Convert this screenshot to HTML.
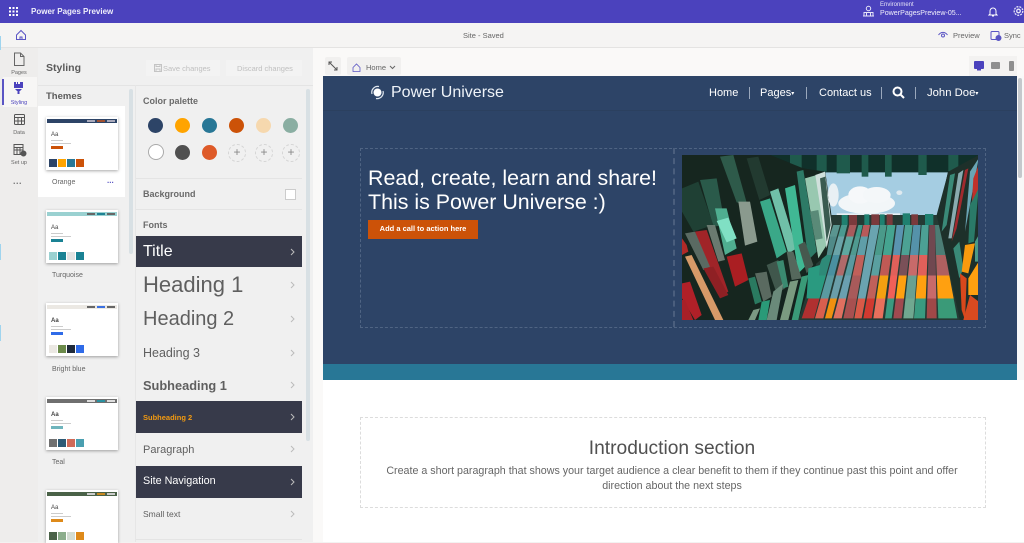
<!DOCTYPE html>
<html><head><meta charset="utf-8"><title>Power Pages Preview</title>
<style>
html,body{margin:0;padding:0}
body{width:1024px;height:542px;overflow:hidden;position:relative;background:#f3f2f1;font-family:"Liberation Sans",sans-serif;color:#555}
.a{position:absolute;white-space:nowrap}
.th{position:absolute;left:46px;width:72px;height:53px;background:#fff;box-shadow:0 1px 3px rgba(0,0,0,.35)}
.th i{position:absolute;display:block}
.th .bar{left:1px;top:2px;width:70px;height:4px}
.th .aa{position:absolute;left:5px;top:15px;font-size:6px;color:#444;font-weight:bold}
.th .l1{left:5px;top:23px;width:12px;height:1px;background:#ccc}
.th .l2{left:5px;top:26px;width:20px;height:1px;background:#ccc}
.th .btn{left:5px;top:29px;width:12px;height:3px}
.th .s{top:42px;width:8px;height:8px}
.tn{position:absolute;left:52px;font-size:7px;color:#666}
.dot{position:absolute;width:15px;height:15px;border-radius:50%}
.plus{position:absolute;width:16px;height:16px;border-radius:50%;border:1px dashed #d5d5d5;color:#888;font-size:12px;line-height:15px;text-align:center}
.row{position:absolute;left:136px;width:166px;color:#5f5f5f}
.row.dk{background:#373a4a;color:#fff}
.row span{position:absolute;left:7px;white-space:nowrap}
.row svg{position:absolute;right:7px;top:50%;margin-top:-4px}
.nl{position:absolute;left:4px;width:30px;text-align:center;font-size:5.5px;color:#666}
.sep{position:absolute;width:1px;height:12px;background:#9aa8bc;top:87px}
.nav{position:absolute;top:87px;font-size:11px;color:#fff;white-space:nowrap}
.lb{position:absolute;left:143px;font-size:9px;font-weight:bold;color:#6a6a6a;white-space:nowrap}
</style></head><body>
<!-- top bar -->
<div class="a" style="left:0;top:0;width:1024px;height:23px;background:#4b42bd"></div>
<svg class="a" style="left:9px;top:7px" width="9" height="9" fill="#fff"><rect width="2" height="2"/><rect x="3.5" width="2" height="2"/><rect x="7" width="2" height="2"/><rect y="3.5" width="2" height="2"/><rect x="3.5" y="3.5" width="2" height="2"/><rect x="7" y="3.5" width="2" height="2"/><rect y="7" width="2" height="2"/><rect x="3.5" y="7" width="2" height="2"/><rect x="7" y="7" width="2" height="2"/></svg>
<div class="a" style="left:31px;top:7px;font-size:8px;font-weight:bold;color:#eeeefa">Power Pages Preview</div>
<svg class="a" style="left:862px;top:5px" width="13" height="13" fill="none" stroke="#e6e4f7" stroke-width="1"><circle cx="6.5" cy="3.5" r="2.2"/><path d="M2 11V7.5h9V11M1 11h11M4.500 7.500V11M8.500 7.500V11"/></svg>
<div class="a" style="left:880px;top:2px;font-size:6px;color:#e6e4f7">Environment</div>
<div class="a" style="left:880px;top:9px;font-size:7.100px;color:#f0effa">PowerPagesPreview-05...</div>
<svg class="a" style="left:988px;top:6px" width="10" height="11" fill="none" stroke="#fff" stroke-width="1"><path d="M2 8V5a3 3 0 0 1 6 0v3l1 1H1zM4 10h2"/></svg>
<svg class="a" style="left:1013px;top:5px" width="11" height="12" fill="none" stroke="#e6e4f7" stroke-width="1.300"><circle cx="5.500" cy="6" r="1.800"/><circle cx="5.500" cy="6" r="4.300" stroke-dasharray="2 1"/></svg>
<!-- second bar -->
<div class="a" style="left:0;top:23px;width:1024px;height:24px;background:#f5f4f3;border-bottom:1px solid #e4e3e2"></div>
<svg class="a" style="left:15px;top:29px" width="12" height="12" fill="none" stroke="#5a55c4" stroke-width="1"><path d="M1.500 6 6 1.500 10.500 6V10.500H1.500zM5 10.500V8h2v2.500"/></svg>
<div class="a" style="left:463px;top:31px;font-size:7.500px;color:#666">Site - Saved</div>
<svg class="a" style="left:938px;top:31px" width="10" height="8" fill="none" stroke="#5a55c4" stroke-width="1"><path d="M.5 4C3 .5 7 .5 9.500 4"/><circle cx="5" cy="4.500" r="1.500"/></svg>
<div class="a" style="left:953px;top:31px;font-size:7.500px;color:#666">Preview</div>
<svg class="a" style="left:990px;top:30px" width="12" height="11" fill="none" stroke="#5a55c4" stroke-width="1"><rect x="1" y="1.500" width="8" height="8" rx="1"/><circle cx="8.500" cy="8" r="2.500" fill="#5a55c4"/></svg>
<div class="a" style="left:1004px;top:31px;font-size:7.500px;color:#666">Sync</div>
<!-- left rail -->
<div class="a" style="left:0;top:48px;width:38px;height:494px;background:#eeedec"></div>
<div class="a" style="left:3px;top:77px;width:34px;height:30px;background:#f7f6f5"></div>
<div class="a" style="left:2px;top:79px;width:2px;height:26px;background:#5a55c4"></div>
<div class="a" style="left:0;top:36px;width:1px;height:14px;background:#9fd4ee"></div>
<div class="a" style="left:0;top:244px;width:1px;height:16px;background:#9fd4ee"></div>
<div class="a" style="left:0;top:325px;width:1px;height:16px;background:#9fd4ee"></div>
<svg class="a" style="left:13px;top:52px" width="12" height="15" fill="none" stroke="#666" stroke-width="1"><path d="M1.500 1h6l3.500 3.500V13.500h-9.500zM7.500 1v3.500H11"/></svg>
<div class="nl" style="top:70px">Pages</div>
<svg class="a" style="left:14px;top:82px" width="10" height="12" fill="#4b42bd"><path d="M0 0h2v2h1V0h1v2h2V0h3v6H0zM1 7h7L6 9H5.500v3h-2V9H3z"/></svg>
<div class="nl" style="top:100px;color:#4b42bd">Styling</div>
<svg class="a" style="left:13px;top:113px" width="13" height="13" fill="none" stroke="#555" stroke-width="1"><rect x="1.500" y="1.500" width="10" height="10" rx="1"/><path d="M1.500 4.500h10M1.500 8h10M5 4.500v7M8.500 4.500v7"/></svg>
<div class="nl" style="top:130px">Data</div>
<svg class="a" style="left:13px;top:143px" width="14" height="14" fill="none" stroke="#555" stroke-width="1"><rect x="1" y="1.500" width="9" height="10"/><path d="M1 4.500h9M1 7h9M4 4.500v7M7 4.500v7"/><circle cx="10.500" cy="10.500" r="2.500" fill="#555"/></svg>
<div class="nl" style="top:160px">Set up</div>
<div class="a" style="left:13px;top:176px;font-size:9px;color:#777;letter-spacing:.5px;font-weight:bold">...</div>
<!-- styling panel -->
<div class="a" style="left:38px;top:48px;width:275px;height:494px;background:#f0f0f0"></div>
<div class="a" style="left:46px;top:62px;font-size:10.500px;font-weight:bold;color:#5a5a5a">Styling</div>
<div class="a" style="left:146px;top:60px;width:74px;height:16px;background:#f3f3f3"></div>
<div class="a" style="left:226px;top:60px;width:76px;height:16px;background:#f3f3f3"></div>
<svg class="a" style="left:154px;top:64px" width="8" height="8" fill="none" stroke="#c4c4c4"><rect x=".5" y=".5" width="7" height="7"/><path d="M2 .5v2h4v-2M2 7.500V5h4v2.500"/></svg>
<div class="a" style="left:163px;top:64px;font-size:7.500px;color:#c0c0c0">Save changes</div>
<div class="a" style="left:237px;top:64px;font-size:7.500px;color:#c0c0c0">Discard changes</div>
<div class="a" style="left:38px;top:85px;width:275px;height:1px;background:#e4e4e4"></div>
<div class="a" style="left:135px;top:85px;width:1px;height:457px;background:#e6e6e6"></div>
<div class="a" style="left:46px;top:91px;font-size:9.500px;font-weight:bold;color:#5a5a5a">Themes</div>
<div class="a" style="left:129px;top:89px;width:4px;height:165px;background:#d8e0e4;border-radius:2px"></div>
<div class="a" style="left:306px;top:89px;width:4px;height:352px;background:#d8e0e4;border-radius:2px"></div>
<div class="a" style="left:38px;top:106px;width:87px;height:91px;background:#fff"></div>

<div class="th" style="top:117px"><i class="bar" style="background:#2d4467"></i><i style="left:41px;top:3px;width:8px;height:2px;background:#aab"></i><i style="left:51px;top:3px;width:8px;height:2px;background:#a05030"></i><i style="left:61px;top:3px;width:8px;height:2px;background:#aab"></i><span class="aa" style="font-weight:normal">Aa</span><i class="l1"></i><i class="l2"></i><i class="btn" style="background:#cc5208"></i><i class="s" style="left:3px;background:#2d4467"></i><i class="s" style="left:12px;background:#ffa400"></i><i class="s" style="left:21px;background:#287796"></i><i class="s" style="left:30px;background:#cc5208"></i></div>
<div class="tn" style="top:179px">Orange</div>
<div class="a" style="left:107px;top:176px;font-size:8px;color:#5a55c4;font-weight:bold">...</div>

<div class="th" style="top:210px"><i class="bar" style="background:#9ad1d1"></i><i style="left:41px;top:3px;width:8px;height:2px;background:#666"></i><i style="left:51px;top:3px;width:8px;height:2px;background:#1f8394"></i><i style="left:61px;top:3px;width:8px;height:2px;background:#666"></i><span class="aa" style="font-weight:normal">Aa</span><i class="l1"></i><i class="l2"></i><i class="btn" style="background:#1a8294"></i><i class="s" style="left:3px;background:#9ad1d1"></i><i class="s" style="left:12px;background:#1a8294"></i><i class="s" style="left:21px;background:#e3e3e3"></i><i class="s" style="left:30px;background:#1a8294"></i></div>
<div class="tn" style="top:272px">Turquoise</div>

<div class="th" style="top:303px"><i class="bar" style="background:#ebe8e3"></i><i style="left:41px;top:3px;width:8px;height:2px;background:#666"></i><i style="left:51px;top:3px;width:8px;height:2px;background:#3a70e0"></i><i style="left:61px;top:3px;width:8px;height:2px;background:#666"></i><span class="aa">Aa</span><i class="l1"></i><i class="l2"></i><i class="btn" style="background:#2f6be8"></i><i class="s" style="left:3px;background:#ebe8e3"></i><i class="s" style="left:12px;background:#6b8a4a"></i><i class="s" style="left:21px;background:#1f2a3a"></i><i class="s" style="left:30px;background:#2f6be8"></i></div>
<div class="tn" style="top:366px">Bright blue</div>

<div class="th" style="top:397px"><i class="bar" style="background:#6f6f6f"></i><i style="left:41px;top:3px;width:8px;height:2px;background:#ddd"></i><i style="left:51px;top:3px;width:8px;height:2px;background:#2a90a0"></i><i style="left:61px;top:3px;width:8px;height:2px;background:#ddd"></i><span class="aa">Aa</span><i class="l1"></i><i class="l2"></i><i class="btn" style="background:#6fb5bd"></i><i class="s" style="left:3px;background:#707070"></i><i class="s" style="left:12px;background:#2d5a75"></i><i class="s" style="left:21px;background:#cf6a58"></i><i class="s" style="left:30px;background:#4a9fb0"></i></div>
<div class="tn" style="top:459px">Teal</div>

<div class="th" style="top:490px"><i class="bar" style="background:#4a6248"></i><i style="left:41px;top:3px;width:8px;height:2px;background:#ccc"></i><i style="left:51px;top:3px;width:8px;height:2px;background:#c98820"></i><i style="left:61px;top:3px;width:8px;height:2px;background:#ccc"></i><span class="aa" style="font-weight:normal">Aa</span><i class="l1"></i><i class="l2"></i><i class="btn" style="background:#de8a1a"></i><i class="s" style="left:3px;background:#4a6248"></i><i class="s" style="left:12px;background:#8bad8b"></i><i class="s" style="left:21px;background:#d3ddd3"></i><i class="s" style="left:30px;background:#de8a1a"></i></div>

<!-- palette -->
<div class="lb" style="top:96px">Color palette</div>
<div class="dot" style="left:148px;top:118px;background:#2d4467"></div>
<div class="dot" style="left:175px;top:118px;background:#ffa400"></div>
<div class="dot" style="left:202px;top:118px;background:#287796"></div>
<div class="dot" style="left:229px;top:118px;background:#cc5208"></div>
<div class="dot" style="left:256px;top:118px;background:#f6d8ae"></div>
<div class="dot" style="left:283px;top:118px;background:#8aaea2"></div>
<div class="dot" style="left:148px;top:144px;width:14px;height:14px;background:#fff;border:1px solid #aaa"></div>
<div class="dot" style="left:175px;top:145px;background:#505050"></div>
<div class="dot" style="left:202px;top:145px;background:#de5a28"></div>
<div class="plus" style="left:228px;top:144px">+</div>
<div class="plus" style="left:255px;top:144px">+</div>
<div class="plus" style="left:282px;top:144px">+</div>
<div class="a" style="left:136px;top:178px;width:166px;height:1px;background:#e4e4e4"></div>
<div class="lb" style="top:189px">Background</div>
<div class="a" style="left:285px;top:189px;width:9px;height:9px;background:#fff;border:1px solid #ccc"></div>
<div class="a" style="left:136px;top:209px;width:166px;height:1px;background:#e4e4e4"></div>
<div class="lb" style="top:220px">Fonts</div>

<div class="row dk" style="top:236px;height:31px"><span style="top:7px;font-size:16px">Title</span><svg width="5" height="8" fill="none" stroke="#bbb"><path d="M1 1l3 3-3 3"/></svg></div>
<div class="row" style="top:268px;height:33px"><span style="top:4px;font-size:22px">Heading 1</span><svg width="5" height="8" fill="none" stroke="#bbb"><path d="M1 1l3 3-3 3"/></svg></div>
<div class="row" style="top:302px;height:33px"><span style="top:6px;font-size:20px">Heading 2</span><svg width="5" height="8" fill="none" stroke="#bbb"><path d="M1 1l3 3-3 3"/></svg></div>
<div class="row" style="top:336px;height:33px"><span style="top:10px;font-size:12.500px">Heading 3</span><svg width="5" height="8" fill="none" stroke="#bbb"><path d="M1 1l3 3-3 3"/></svg></div>
<div class="row" style="top:369px;height:32px"><span style="top:9px;font-size:12.800px;font-weight:bold">Subheading 1</span><svg width="5" height="8" fill="none" stroke="#bbb"><path d="M1 1l3 3-3 3"/></svg></div>
<div class="row dk" style="top:401px;height:32px"><span style="top:12px;font-size:7.500px;font-weight:bold;color:#f39a10">Subheading 2</span><svg width="5" height="8" fill="none" stroke="#bbb"><path d="M1 1l3 3-3 3"/></svg></div>
<div class="row" style="top:433px;height:32px"><span style="top:11px;font-size:11px">Paragraph</span><svg width="5" height="8" fill="none" stroke="#bbb"><path d="M1 1l3 3-3 3"/></svg></div>
<div class="row dk" style="top:466px;height:32px"><span style="top:9px;font-size:10.800px">Site Navigation</span><svg width="5" height="8" fill="none" stroke="#bbb"><path d="M1 1l3 3-3 3"/></svg></div>
<div class="row" style="top:498px;height:32px"><span style="top:11px;font-size:8.500px">Small text</span><svg width="5" height="8" fill="none" stroke="#bbb"><path d="M1 1l3 3-3 3"/></svg></div>
<div class="a" style="left:136px;top:539px;width:166px;height:1px;background:#e4e4e4"></div>

<!-- canvas -->
<div class="a" style="left:313px;top:48px;width:711px;height:494px;background:#faf9f8"></div>
<div class="a" style="left:325px;top:57px;width:16px;height:18px;background:#f1f0ef;border-radius:2px"></div>
<svg class="a" style="left:328px;top:61px" width="10" height="10" fill="none" stroke="#555"><path d="M1 4V1h3M1 1l8 8M9 6v3H6"/></svg>
<div class="a" style="left:347px;top:57px;width:54px;height:18px;background:#f1f0ef;border-radius:2px"></div>
<svg class="a" style="left:352px;top:63px" width="9" height="9" fill="none" stroke="#5a55c4" stroke-width=".8"><path d="M1 4.500 4.500 1 8 4.500V8.500H1z"/></svg>
<div class="a" style="left:366px;top:63px;font-size:7.500px;color:#666">Home</div>
<svg class="a" style="left:389px;top:65px" width="7" height="5" fill="none" stroke="#666"><path d="M1 1l2.500 2.500L6 1"/></svg>
<div class="a" style="left:969px;top:56px;width:48px;height:20px;background:#f3f2f1"></div>
<svg class="a" style="left:974px;top:61px" width="10" height="10" fill="#4b42bd"><rect width="10" height="8" rx="1"/><rect x="3" y="8" width="4" height="1.500"/></svg>
<svg class="a" style="left:991px;top:62px" width="10" height="8" fill="#8f8f8f"><rect width="9" height="7" rx="1"/></svg>
<svg class="a" style="left:1009px;top:61px" width="6" height="10" fill="#8f8f8f"><rect width="5" height="10" rx="1"/></svg>
<!-- preview -->
<div class="a" style="left:323px;top:76px;width:694px;height:288px;background:#2d4467"></div>
<div class="a" style="left:323px;top:364px;width:694px;height:16px;background:#287796"></div>
<div class="a" style="left:323px;top:380px;width:701px;height:162px;background:#fff"></div>
<div class="a" style="left:1017px;top:76px;width:7px;height:304px;background:#f8f8f8"></div>
<div class="a" style="left:1018px;top:78px;width:4px;height:100px;background:#c4c8cc;border-radius:2px"></div>
<div class="a" style="left:323px;top:110px;width:694px;height:1px;background:#2b405f"></div>
<svg class="a" style="left:370px;top:85px" width="15" height="15" fill="none"><circle cx="7.500" cy="7.500" r="4" fill="#fff"/><path d="M2 9A6 6 0 0 1 9 1.500M13 6a6 6 0 0 1-7 7.500" stroke="#dfe6ee" stroke-width="1.200"/></svg>
<div class="a" style="left:391px;top:84px;font-size:16px;color:#eef3f8">Power Universe</div>
<div class="nav" style="left:709px">Home</div>
<div class="sep" style="left:749px"></div>
<div class="nav" style="left:760px">Pages<span style="font-size:6px;vertical-align:1px">▾</span></div>
<div class="sep" style="left:806px"></div>
<div class="nav" style="left:819px">Contact us</div>
<div class="sep" style="left:881px"></div>
<svg class="a" style="left:892px;top:86px" width="13" height="13" fill="none" stroke="#fff" stroke-width="2"><circle cx="5.500" cy="5.500" r="4"/><path d="M8.500 8.500l3.500 3.500"/></svg>
<div class="sep" style="left:915px"></div>
<div class="nav" style="left:927px;font-size:11.300px">John Doe<span style="font-size:6px;vertical-align:1px">▾</span></div>
<!-- hero -->
<div class="a" style="left:360px;top:148px;width:624px;height:178px;border:1px dashed #4f6483"></div>
<div class="a" style="left:673px;top:148px;width:0;height:179px;border-left:2px dashed #4a5e7d"></div>
<div class="a" style="left:368px;top:166px;font-size:21.400px;line-height:24px;color:#fff">Read, create, learn and share!<br>This is Power Universe :)</div>
<div class="a" style="left:368px;top:220px;width:110px;height:19px;background:#cc5208;color:#fff;font-size:7.500px;font-weight:bold;text-align:center;line-height:18px">Add a call to action here</div>
<svg class="a" style="left:682px;top:155px" width="296" height="165" viewBox="0 0 296 165">
<defs>
<linearGradient id="cA" gradientUnits="userSpaceOnUse" x1="0" y1="240" x2="0" y2="520"><stop offset=".125" stop-color="#5a9590"/><stop offset=".125" stop-color="#508a88"/><stop offset=".32" stop-color="#508a88"/><stop offset=".32" stop-color="#2e8a78"/><stop offset=".54" stop-color="#2e8a78"/><stop offset=".54" stop-color="#2a9a80"/><stop offset=".79" stop-color="#2a9a80"/><stop offset=".79" stop-color="#b03030"/></linearGradient>
<linearGradient id="cB" gradientUnits="userSpaceOnUse" x1="0" y1="240" x2="0" y2="520"><stop offset=".125" stop-color="#4a9a90"/><stop offset=".125" stop-color="#6aa4a8"/><stop offset=".32" stop-color="#6aa4a8"/><stop offset=".32" stop-color="#4a90a0"/><stop offset=".54" stop-color="#4a90a0"/><stop offset=".54" stop-color="#5a9aa0"/><stop offset=".79" stop-color="#5a9aa0"/><stop offset=".79" stop-color="#d85f4e"/></linearGradient>
<linearGradient id="cC" gradientUnits="userSpaceOnUse" x1="0" y1="240" x2="0" y2="520"><stop offset=".125" stop-color="#a85a5c"/><stop offset=".125" stop-color="#5fa8a0"/><stop offset=".32" stop-color="#5fa8a0"/><stop offset=".32" stop-color="#b06a6a"/><stop offset=".54" stop-color="#b06a6a"/><stop offset=".54" stop-color="#6a9ea8"/><stop offset=".79" stop-color="#6a9ea8"/><stop offset=".79" stop-color="#f09010"/></linearGradient>
<linearGradient id="cD" gradientUnits="userSpaceOnUse" x1="0" y1="240" x2="0" y2="520"><stop offset=".125" stop-color="#3f9a8a"/><stop offset=".125" stop-color="#4f9a90"/><stop offset=".32" stop-color="#4f9a90"/><stop offset=".32" stop-color="#5a9aa0"/><stop offset=".54" stop-color="#5a9aa0"/><stop offset=".54" stop-color="#6aa0b0"/><stop offset=".79" stop-color="#6aa0b0"/><stop offset=".79" stop-color="#e07060"/></linearGradient>
<linearGradient id="cE" gradientUnits="userSpaceOnUse" x1="0" y1="240" x2="0" y2="520"><stop offset=".125" stop-color="#b85a5a"/><stop offset=".125" stop-color="#5f9ea8"/><stop offset=".32" stop-color="#5f9ea8"/><stop offset=".32" stop-color="#c0605a"/><stop offset=".54" stop-color="#c0605a"/><stop offset=".54" stop-color="#a85a5a"/><stop offset=".79" stop-color="#a85a5a"/><stop offset=".79" stop-color="#a85050"/></linearGradient>
<linearGradient id="cF" gradientUnits="userSpaceOnUse" x1="0" y1="240" x2="0" y2="520"><stop offset=".79" stop-color="#6aa4b0"/><stop offset=".79" stop-color="#d85a48"/></linearGradient>
<linearGradient id="cG" gradientUnits="userSpaceOnUse" x1="0" y1="240" x2="0" y2="520"><stop offset=".32" stop-color="#4a9a8a"/><stop offset=".32" stop-color="#5aa0a0"/><stop offset=".54" stop-color="#5aa0a0"/><stop offset=".54" stop-color="#c0605a"/><stop offset=".79" stop-color="#c0605a"/><stop offset=".79" stop-color="#d03a30"/></linearGradient>
<linearGradient id="cH" gradientUnits="userSpaceOnUse" x1="0" y1="240" x2="0" y2="520"><stop offset=".32" stop-color="#45a490"/><stop offset=".32" stop-color="#c05a55"/><stop offset=".54" stop-color="#c05a55"/><stop offset=".54" stop-color="#f4a010"/><stop offset=".79" stop-color="#f4a010"/><stop offset=".79" stop-color="#e8705c"/></linearGradient>
<linearGradient id="cI" gradientUnits="userSpaceOnUse" x1="0" y1="240" x2="0" y2="520"><stop offset=".32" stop-color="#5a94b0"/><stop offset=".32" stop-color="#e0605a"/><stop offset=".54" stop-color="#e0605a"/><stop offset=".54" stop-color="#f06058"/><stop offset=".79" stop-color="#f06058"/><stop offset=".79" stop-color="#3a9a80"/></linearGradient>
<linearGradient id="cJ" gradientUnits="userSpaceOnUse" x1="0" y1="240" x2="0" y2="520"><stop offset=".32" stop-color="#4ca294"/><stop offset=".32" stop-color="#7a5058"/><stop offset=".54" stop-color="#7a5058"/><stop offset=".54" stop-color="#ffa010"/><stop offset=".79" stop-color="#ffa010"/><stop offset=".79" stop-color="#a04a50"/></linearGradient>
<linearGradient id="cK" gradientUnits="userSpaceOnUse" x1="0" y1="240" x2="0" y2="520"><stop offset=".32" stop-color="#5592aa"/><stop offset=".32" stop-color="#c86a6a"/><stop offset=".54" stop-color="#c86a6a"/><stop offset=".54" stop-color="#6aa090"/><stop offset=".79" stop-color="#6aa090"/><stop offset=".79" stop-color="#70a890"/></linearGradient>
<linearGradient id="cL" gradientUnits="userSpaceOnUse" x1="0" y1="240" x2="0" y2="520"><stop offset=".32" stop-color="#4ca094"/><stop offset=".32" stop-color="#e0605a"/><stop offset=".54" stop-color="#e0605a"/><stop offset=".54" stop-color="#ffa010"/><stop offset=".79" stop-color="#ffa010"/><stop offset=".79" stop-color="#3a9a80"/></linearGradient>
<linearGradient id="cM" gradientUnits="userSpaceOnUse" x1="0" y1="240" x2="0" y2="520"><stop offset=".54" stop-color="#704850"/><stop offset=".54" stop-color="#c86a6a"/><stop offset=".79" stop-color="#c86a6a"/><stop offset=".79" stop-color="#a04848"/></linearGradient>
<linearGradient id="cN" gradientUnits="userSpaceOnUse" x1="0" y1="240" x2="0" y2="520"><stop offset=".32" stop-color="#4c7d75"/><stop offset=".32" stop-color="#b06060"/><stop offset=".54" stop-color="#b06060"/><stop offset=".54" stop-color="#ffa010"/><stop offset=".79" stop-color="#ffa010"/><stop offset=".79" stop-color="#3a9a78"/></linearGradient>
</defs>
<g transform="translate(-12,-10) scale(.33333)">
<rect x="36" y="30" width="890" height="495" fill="#14231e"/>
<!-- sky -->
<polygon points="465,75 835,75 805,215 485,215" fill="#a5cde2"/>
<ellipse cx="590" cy="175" rx="85" ry="32" fill="#f2f6f8"/><ellipse cx="570" cy="150" rx="35" ry="26" fill="#f6f8fa"/><ellipse cx="620" cy="150" rx="42" ry="24" fill="#f4f7f9"/><ellipse cx="490" cy="150" rx="16" ry="35" fill="#e8f0f4"/><ellipse cx="688" cy="143" rx="9" ry="7" fill="#dfeaf0"/>
<rect x="500" y="205" width="190" height="8" fill="#e8f0f4"/>
<!-- top band -->
<polygon points="300,30 926,30 926,45 835,82 465,82 400,70" fill="#10302a"/>
<g fill="#1f5a4c"><rect x="360" y="30" width="35" height="42"/><rect x="440" y="30" width="30" height="50"/><rect x="500" y="30" width="40" height="55"/><rect x="575" y="30" width="20" height="65"/><rect x="645" y="30" width="20" height="65"/><rect x="745" y="30" width="25" height="60"/><rect x="835" y="30" width="30" height="48"/></g>
<!-- back wall -->
<polygon points="485,210 805,210 870,525 385,525" fill="#253a34"/>
<polygon points="490,240 510,240 432,520 395,520" fill="url(#cA)"/>
<polygon points="514,240 532,240 460,520 435,520" fill="url(#cB)"/>
<polygon points="538,240 560,240 485,520 465,520" fill="url(#cC)"/>
<polygon points="565,240 578,240 515,520 490,520" fill="url(#cD)"/>
<polygon points="580,240 600,240 550,520 520,520" fill="url(#cE)"/>
<polygon points="603,240 628,240 575,520 553,520" fill="url(#cF)"/>
<polygon points="630,240 650,240 605,520 580,520" fill="url(#cG)"/>
<polygon points="652,240 676,240 638,520 610,520" fill="url(#cH)"/>
<polygon points="680,240 702,240 665,520 645,520" fill="url(#cI)"/>
<polygon points="705,240 728,240 695,520 670,520" fill="url(#cJ)"/>
<polygon points="730,240 752,240 730,520 700,520" fill="url(#cK)"/>
<polygon points="755,240 776,240 765,520 732,520" fill="url(#cL)"/>
<polygon points="778,240 795,240 800,520 770,520" fill="url(#cM)"/>
<polygon points="795,240 810,240 862,520 805,520" fill="url(#cN)"/>
<g fill="#1f8070"><rect x="515" y="210" width="18" height="30"/><rect x="583" y="208" width="15" height="32"/><rect x="630" y="208" width="14" height="32"/><rect x="698" y="205" width="22" height="35"/><rect x="765" y="207" width="25" height="33"/></g>
<g fill="#7a3a3c"><rect x="537" y="210" width="24" height="30"/><rect x="604" y="208" width="24" height="32"/><rect x="650" y="208" width="18" height="32"/><rect x="724" y="208" width="20" height="32"/></g>
<!-- left wall -->
<polygon points="36,30 300,30 400,70 465,80 485,240 470,330 330,445 235,525 36,525" fill="#16261f"/>
<polygon points="150,35 190,30 232,180 200,172" fill="#2e5a4a"/>
<polygon points="90,105 140,100 165,240 130,245" fill="#2a5a4a"/>
<polygon points="36,130 85,110 130,240 70,260 36,200" fill="#1f4034"/>
<polygon points="230,40 265,35 300,150 268,165" fill="#223a30"/>
<polygon points="135,190 170,190 200,310 165,330" fill="#4fae90"/>
<polygon points="140,228 175,218 200,280 170,292" fill="#80e0c4"/>
<polygon points="205,170 240,170 262,290 225,302" fill="#8a9a8e"/>
<polygon points="270,170 300,160 350,320 320,340" fill="#3aa888"/>
<polygon points="300,140 325,130 380,310 355,325" fill="#70c0a8"/>
<polygon points="345,130 375,120 410,360 385,385" fill="#40b894"/>
<polygon points="380,80 400,75 440,320 415,345" fill="#2d7a66"/>
<polygon points="405,100 440,90 470,300 445,340" fill="#98c8b0"/>
<polygon points="420,200 445,195 458,280 435,285" fill="#5a8a78"/>
<polygon points="436,90 465,80 485,240 470,310" fill="#d0e0dc"/>
<polygon points="450,100 466,95 482,240 470,290" fill="#3a5a50"/>
<polygon points="75,260 110,255 175,440 150,455" fill="#a02428"/>
<polygon points="170,335 215,325 235,405 195,425" fill="#aa1e22"/>
<polygon points="45,265 75,260 120,365 100,375" fill="#5a6a62"/>
<polygon points="110,240 135,240 165,345 145,350" fill="#6a7a70"/>
<polygon points="255,385 290,380 305,455 280,470" fill="#5a6a60"/>
<polygon points="290,360 325,345 345,430 320,445" fill="#40574c"/>
<polygon points="320,350 340,345 355,425 340,430" fill="#3a8a70"/>
<polygon points="350,320 370,320 395,400 365,405" fill="#55685c"/>
<polygon points="385,300 405,290 430,360 410,385" fill="#46584e"/>
<polygon points="235,400 255,395 275,470 255,478" fill="#2a7a60"/>
<polygon points="250,495 270,490 255,525 235,525" fill="#7a9a84"/>
<polygon points="275,470 300,465 290,525 265,525" fill="#2a9a78"/>
<polygon points="310,440 340,415 320,525 290,525" fill="#6a8a7a"/>
<polygon points="360,410 385,405 355,525 330,525" fill="#7a9a80"/>
<polygon points="395,395 415,390 385,525 365,525" fill="#3a9a78"/>
<polygon points="415,370 450,360 440,460 410,460" fill="#2a9a80"/>
<polygon points="45,335 65,330 160,525 135,525" fill="#d69a68"/>
<polygon points="36,415 60,410 95,510 75,525 36,460" fill="#b02028"/>
<polygon points="36,465 45,465 70,525 36,525" fill="#a82028"/>
<polygon points="36,280 50,300 55,320 36,330" fill="#b02a28"/>
<polygon points="100,370 130,365 175,450 150,460" fill="#8f2024"/>
<!-- right wall -->
<polygon points="800,210 835,80 926,30 926,525 870,525" fill="#1d302a"/>
<polygon points="840,90 855,85 830,240 815,260" fill="#3a8a78"/>
<polygon points="865,85 880,75 845,280 835,280" fill="#8aabb0"/>
<polygon points="885,75 895,70 860,250 845,290" fill="#a02a2e"/>
<polygon points="900,80 926,40 900,180 885,260" fill="#6aa4b4"/>
<polygon points="910,100 926,60 926,140 905,185" fill="#c0302a"/>
<polygon points="900,180 926,130 912,290 895,295" fill="#2a7a68"/>
<polygon points="850,310 868,290 880,370 868,400" fill="#3a8a78"/>
<polygon points="885,300 915,295 895,385 875,380" fill="#f89a0e"/>
<polygon points="915,290 926,270 926,350 915,350" fill="#4a9a88"/>
<polygon points="926,350 895,400 895,450 926,450" fill="#ffa010"/>
<polygon points="870,385 890,400 885,525 875,495" fill="#d8481c"/>
<polygon points="900,450 926,470 926,525 880,525" fill="#d84a20"/>
</g>
</svg>
<!-- intro -->
<div class="a" style="left:360px;top:417px;width:624px;height:89px;border:1px dashed #dcdcdc"></div>
<div class="a" style="left:359px;top:438px;width:626px;text-align:center;font-size:19.200px;color:#505050">Introduction section</div>
<div class="a" style="left:359px;top:464px;width:626px;text-align:center;font-size:10.700px;line-height:15px;color:#666;white-space:normal">Create a short paragraph that shows your target audience a clear benefit to them if they continue past this point and offer<br>direction about the next steps</div>
</body></html>
